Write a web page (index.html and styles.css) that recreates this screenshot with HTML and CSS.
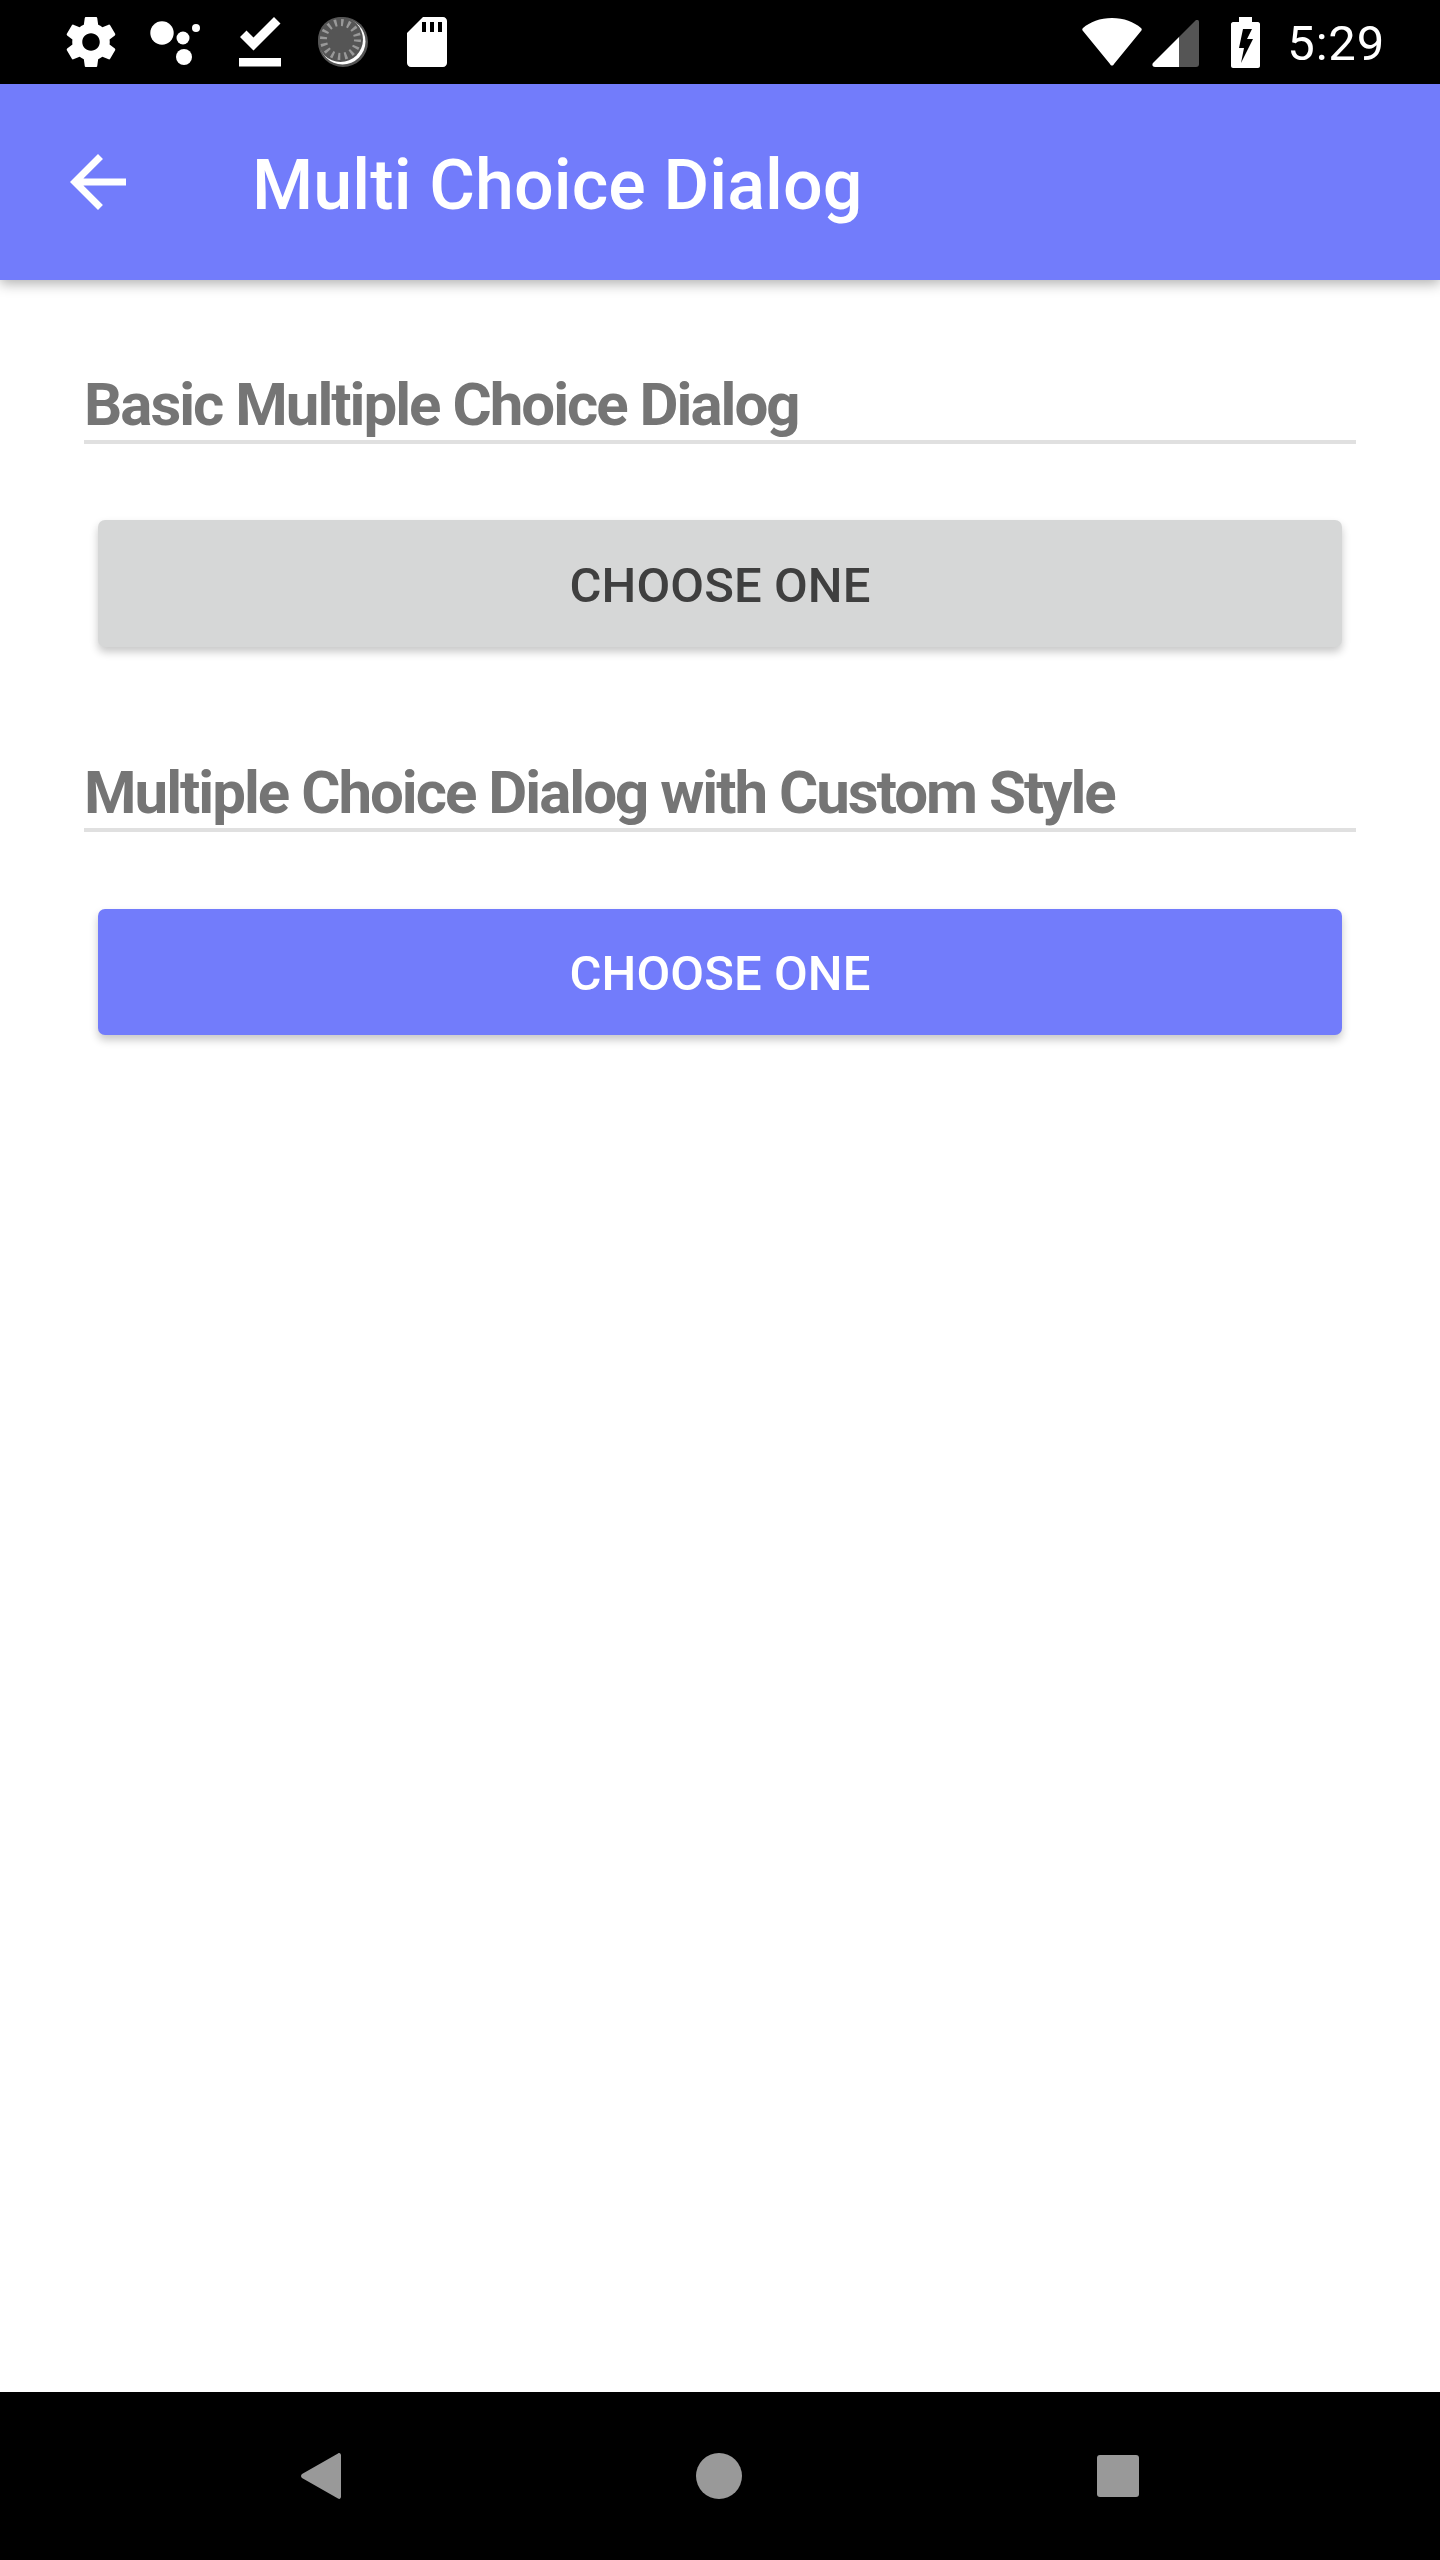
FILE: index.html
```html
<!DOCTYPE html>
<html lang="en">
<head>
    <meta charset="UTF-8">
    <meta name="viewport" content="width=device-width, initial-scale=1.0">
    <title>Multi Choice Dialog</title>
    <link rel="stylesheet" href="styles.css">
</head>
<body>
    <div class="status-bar">
        <div class="status-left">
            <!-- settings -->
            <svg class="icon-gear" viewBox="0 0 24 24"><path fill="#fff" d="M19.43 12.98c.04-.32.07-.64.07-.98s-.03-.66-.07-.98l2.11-1.65c.19-.15.24-.42.12-.64l-2-3.46c-.12-.22-.39-.3-.61-.22l-2.49 1c-.52-.4-1.08-.73-1.69-.98l-.38-2.65C14.46 2.18 14.25 2 14 2h-4c-.25 0-.46.18-.49.42l-.38 2.65c-.61.25-1.17.59-1.69.98l-2.49-1c-.23-.09-.49 0-.61.22l-2 3.46c-.13.22-.07.49.12.64l2.11 1.65c-.04.32-.07.65-.07.98s.03.66.07.98l-2.11 1.65c-.19.15-.24.42-.12.64l2 3.46c.12.22.39.3.61.22l2.49-1c.52.4 1.08.73 1.69.98l.38 2.65c.03.24.24.42.49.42h4c.25 0 .46-.18.49-.42l.38-2.65c.61-.25 1.17-.59 1.69-.98l2.49 1c.23.09.49 0 .61-.22l2-3.46c.12-.22.07-.49-.12-.64l-2.11-1.65zM12 15.5c-1.93 0-3.5-1.57-3.5-3.5s1.57-3.5 3.5-3.5 3.5 1.57 3.5 3.5-1.57 3.5-3.5 3.5z"/></svg>
            <!-- assistant dots -->
            <svg class="icon-dots" viewBox="0 0 54 50"><g fill="#fff"><circle cx="12" cy="16" r="11.7"/><circle cx="33" cy="21" r="6.5"/><circle cx="34" cy="40" r="8"/><circle cx="46" cy="11" r="4"/></g></svg>
            <!-- download done -->
            <svg class="icon-check" viewBox="0 0 42 50"><path fill="#fff" d="M0 41h42v8.500H0zM14.500 33.500 1 20l6.500-6.500 7 7L35 0l6.500 6.500z"/></svg>
            <!-- sync dial -->
            <svg class="icon-dial" viewBox="0 0 50 50">
                <circle cx="25" cy="25" r="25" fill="#555"/>
                <circle cx="24.500" cy="24.500" r="23" fill="#fff"/>
                <circle cx="22.500" cy="22.500" r="22.500" fill="#555"/>
                <circle cx="22.500" cy="22.500" r="17" fill="none" stroke="#999" stroke-width="7" stroke-dasharray="2.400 4.280"/>
            </svg>
            <!-- sd card -->
            <svg class="icon-sd" viewBox="0 0 40 50"><path fill="#fff" fill-rule="evenodd" d="M16 0h20c2.200 0 4 1.800 4 4v42c0 2.200-1.800 4-4 4H4c-2.200 0-4-1.800-4-4V16zM15 5v10h4V5zM23 5v10h4V5zM31 5v10h4V5z"/></svg>
        </div>
        <div class="status-right">
            <svg class="icon-wifi" viewBox="0 0 60 48"><path fill="#fff" d="M30 0C18 0 8 4 1 10c-1 1-1 2 0 3l27 33c1 2 3 2 4 0l27-33c1-1 1-2 0-3C52 4 42 0 30 0z"/></svg>
            <svg class="icon-signal" viewBox="0 0 47 47"><path fill="#fff" d="M27 17 1 43c-1 1-1 4 2 4h24z"/><path fill="#555" d="M27 17 44 0c1-1 3 0 3 2v42c0 2-1 3-3 3H27z"/></svg>
            <svg class="icon-battery" viewBox="0 0 29 51"><path fill="#fff" fill-rule="evenodd" d="M8 0h13v5h6c1 0 2 1 2 2v42c0 1-1 2-2 2H2c-1 0-2-1-2-2V7c0-1 1-2 2-2h6zM12 12 8 31h5l-3 15 12-24h-6l5-10z"/></svg>
            <span class="clock">5:29</span>
        </div>
    </div>

    <div class="toolbar">
        <svg class="icon-back" viewBox="0 0 24 24"><path fill="#fff" d="M20 11H7.830l5.590-5.590L12 4l-8 8 8 8 1.410-1.410L7.830 13H20v-2z"/></svg>
        <h1>Multi Choice Dialog</h1>
    </div>

    <div class="content">
        <h2>Basic Multiple Choice Dialog</h2>
        <button class="btn" type="button">Choose one</button>
        <h2>Multiple Choice Dialog with Custom Style</h2>
        <button class="btn btn-primary" type="button">Choose one</button>
    </div>

    <div class="nav-bar">
        <svg class="nav-back" viewBox="0 0 40 46"><path fill="#999" d="M37 .5c1.500-1 3 0 3 2v41c0 2-1.500 3-3 2L1 25c-1.300-1-1.300-3 0-4z"/></svg>
        <span class="nav-home"></span>
        <span class="nav-recent"></span>
    </div>
</body>
</html>
```

FILE: styles.css
```css
* {
    box-sizing: border-box;
}
body {
    margin: 0;
    height: 2560px;
    display: flex;
    flex-direction: column;
    background-color: #fff;
    font-family: Roboto, sans-serif;
}
svg {
    display: block;
    flex: none;
}

/* Status bar */
.status-bar {
    height: 84px;
    background-color: #000;
    display: flex;
    align-items: center;
    justify-content: space-between;
    padding: 0 55px 0 64px;
}
.status-left, .status-right {
    display: flex;
    align-items: center;
}
.icon-gear {
    width: 60px;
    height: 60px;
    margin: 0 29px 0 -3px;
}
.icon-dots {
    width: 54px;
    height: 50px;
    margin-right: 35px;
}
.icon-check {
    width: 42px;
    height: 50px;
    margin-right: 37px;
}
.icon-dial {
    width: 50px;
    height: 50px;
    margin-right: 39px;
}
.icon-sd {
    width: 40px;
    height: 50px;
}
.icon-wifi {
    width: 60px;
    height: 48px;
    margin-right: 10px;
}
.icon-signal {
    width: 47px;
    height: 47px;
    margin: 3px 32px 0 0;
}
.icon-battery {
    width: 29px;
    height: 51px;
    margin-right: 27px;
}
.clock {
    color: #fff;
    font-size: 49px;
    letter-spacing: 0.8px;
    line-height: 84px;
    padding-top: 3px;
}

/* Toolbar */
.toolbar {
    height: 196px;
    background-color: #727cfb;
    display: flex;
    align-items: center;
    padding-left: 56px;
    box-shadow: 0 4px 12px rgba(0, 0, 0, 0.3);
    position: relative;
}
.icon-back {
    width: 84px;
    height: 84px;
    margin-right: 112px;
}
.toolbar h1 {
    margin: 0;
    padding-top: 6px;
    color: #fff;
    font-size: 70px;
    font-weight: 500;
    letter-spacing: 0.1px;
}

/* Content */
.content {
    flex: 1;
    padding: 0 84px;
}
.content h2 {
    margin: 85px 0 0;
    height: 100px;
    padding-top: 28px;
    color: #757575;
    font-size: 60px;
    font-weight: 700;
    letter-spacing: -2px;
    line-height: 66px;
    white-space: nowrap;
    border-bottom: 4px solid #e0e0e0;
}
.content h2:first-child {
    margin-top: 64px;
}
.btn {
    display: block;
    width: 1244px;
    height: 127px;
    margin: 76px 0 0 14px;
    padding-top: 4px;
    border: none;
    border-radius: 7px;
    background-color: #d6d7d7;
    color: #3f3f3f;
    font-family: Roboto, sans-serif;
    font-size: 49px;
    font-weight: 500;
    letter-spacing: 0.1px;
    text-transform: uppercase;
    box-shadow: 0 5px 9px rgba(0, 0, 0, 0.22);
}
.btn-primary {
    height: 126px;
    margin-top: 77px;
    background-color: #727cfb;
    color: #fff;
}

/* Navigation bar */
.nav-bar {
    height: 168px;
    background-color: #000;
    display: flex;
    align-items: center;
    padding-left: 301px;
}
.nav-back {
    width: 40px;
    height: 46px;
    margin-right: 355px;
}
.nav-home {
    width: 46px;
    height: 46px;
    border-radius: 50%;
    background-color: #999;
    margin-right: 355px;
}
.nav-recent {
    width: 42px;
    height: 42px;
    border-radius: 3px;
    background-color: #999;
}
```
